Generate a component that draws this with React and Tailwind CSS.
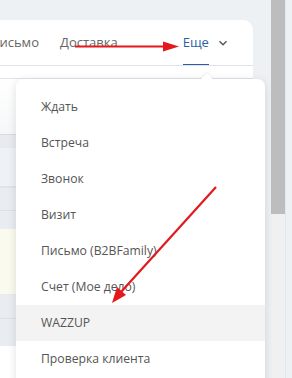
import React from "react";

const items = [
    "Ждать",
    "Встреча",
    "Звонок",
    "Визит",
    "Письмо (B2BFamily)",
    "Счет (Мое дело)",
    "WAZZUP",
    "Проверка клиента",
];

export default function App() {
    return (
        <div
            className="relative w-[292px] h-[378px] overflow-hidden bg-[#eef1f4] flex"
            style={{ fontFamily: '"Open Sans", "Noto Sans", sans-serif' }}
        >
            {/* Page area */}
            <div className="w-[271px] shrink-0 pt-[20px]">
                <div className="w-[253px] bg-white rounded-tr-[10px] h-full">
                    {/* Tabs */}
                    <div className="h-[46px] border-b border-[#dfe3e8] flex items-center text-[13px] text-[#666] whitespace-nowrap overflow-hidden">
                        <span className="ml-[-10px]">Письмо</span>
                        <span className="ml-[21px]">Доставка</span>
                        <span className="ml-[65px] relative h-full flex items-center text-[#2d5ea8]">
                            Еще
                            <span className="absolute left-0 right-0 bottom-[-1px] h-[2px] bg-[#2d5ea8]" />
                        </span>
                        <svg className="ml-[9px]" width="10" height="10" viewBox="0 0 10 10" fill="none">
                            <path d="M1.5 3.2 L5 6.7 L8.5 3.2" stroke="#555" strokeWidth="1.4" />
                        </svg>
                    </div>
                    {/* Filter row */}
                    <div className="h-[13px] border-b border-[#dfe3e8]" />
                    {/* Table */}
                    <div className="h-[56px] bg-gradient-to-b from-white to-[#f6f7f9] border-b border-[#d7dbe0]" />
                    <div className="h-[13px] bg-[#e7ebef]" />
                    <div className="h-[40px] bg-[#eef2f6] border-b-2 border-[#e0e4e9]" />
                    <div className="h-[23px] bg-[#e9edf1] border-b border-[#dde1e6]" />
                    <div className="h-[18px] bg-[#e9edf1]" />
                    <div className="h-[65px] bg-[#fbfaee]" />
                    <div className="h-[25px] bg-[#e9edf1] border-b border-[#dde1e6]" />
                    <div className="h-[27px] bg-[#e9edf1]" />
                </div>
            </div>

            {/* Scrollbar */}
            <div className="w-[14px] shrink-0 flex flex-col bg-[#f0f0f0]">
                <div className="h-[214px] bg-[#bdbdbd]" />
            </div>
            <div className="flex-1 bg-[#eef1f4] border-l border-[#e4e7ea]" />

            {/* Dropdown menu */}
            <div className="absolute left-[16px] top-[79px] w-[249px] h-[320px] bg-white rounded-[8px] shadow-[0_2px_10px_rgba(0,0,0,0.12)] pt-[10px]">
                <div className="absolute top-[-4px] left-[186px] w-[10px] h-[10px] bg-white rotate-45 shadow-[-1px_-1px_2px_rgba(0,0,0,0.05)]" />
                {items.map((item) => (
                    <div
                        key={item}
                        className={
                            "relative h-[36px] flex items-center pl-[25px] text-[12.2px] text-[#555] " +
                            (item === "WAZZUP" ? "bg-[#f3f3f3]" : "")
                        }
                    >
                        {item}
                    </div>
                ))}
            </div>

            {/* Annotation arrows */}
            <svg className="absolute left-0 top-0 pointer-events-none" width="292" height="378" viewBox="0 0 292 378">
                <line x1="75" y1="46.5" x2="166" y2="46.5" stroke="#e3191b" strokeWidth="2.2" />
                <path d="M179 46.5 L163 41.5 L163 51.5 Z" fill="#e3191b" />
                <line x1="216" y1="187" x2="121" y2="292" stroke="#e3191b" strokeWidth="2.2" />
                <path d="M112 303 L117 287 L126 295 Z" fill="#e3191b" />
            </svg>
        </div>
    );
}
